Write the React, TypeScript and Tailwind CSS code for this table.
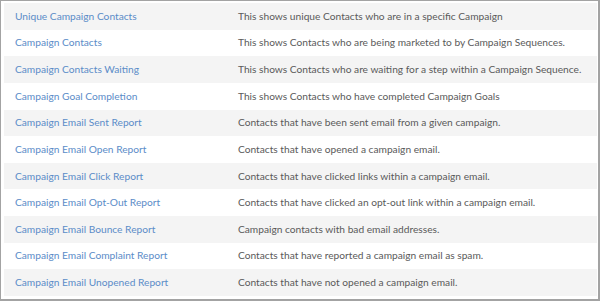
const reports = [
    ['Unique Campaign Contacts', 'This shows unique Contacts who are in a specific Campaign'],
    ['Campaign Contacts', 'This shows Contacts who are being marketed to by Campaign Sequences.'],
    ['Campaign Contacts Waiting', 'This shows Contacts who are waiting for a step within a Campaign Sequence.'],
    ['Campaign Goal Completion', 'This shows Contacts who have completed Campaign Goals'],
    ['Campaign Email Sent Report', 'Contacts that have been sent email from a given campaign.'],
    ['Campaign Email Open Report', 'Contacts that have opened a campaign email.'],
    ['Campaign Email Click Report', 'Contacts that have clicked links within a campaign email.'],
    ['Campaign Email Opt-Out Report', 'Contacts that have clicked an opt-out link within a campaign email.'],
    ['Campaign Email Bounce Report', 'Campaign contacts with bad email addresses.'],
    ['Campaign Email Complaint Report', 'Contacts that have reported a campaign email as spam.'],
    ['Campaign Email Unopened Report', 'Contacts that have not opened a campaign email.'],
]

export default function App() {
    return (
        <div className="w-[600px] h-[301px] bg-white border-l border-t border-r-2 border-b-2 border-[#a3a3a3] pl-[3px] pt-[2px] pr-px pb-[3px] font-['Lato',sans-serif] text-[10.2px]">
            <div className="h-full flex flex-col">
                {reports.map(([name, desc], i) => (
                    <div
                        key={name}
                        className={`flex-1 flex items-center whitespace-nowrap ${i % 2 === 0 ? 'bg-[#f4f4f4]' : 'bg-white'}`}
                    >
                        <a href="#" className="block shrink-0 w-[234px] pl-[11px] text-[#5b8cc8]">{name}</a>
                        <span className="text-[#5a5a5a]">{desc}</span>
                    </div>
                ))}
            </div>
        </div>
    )
}
